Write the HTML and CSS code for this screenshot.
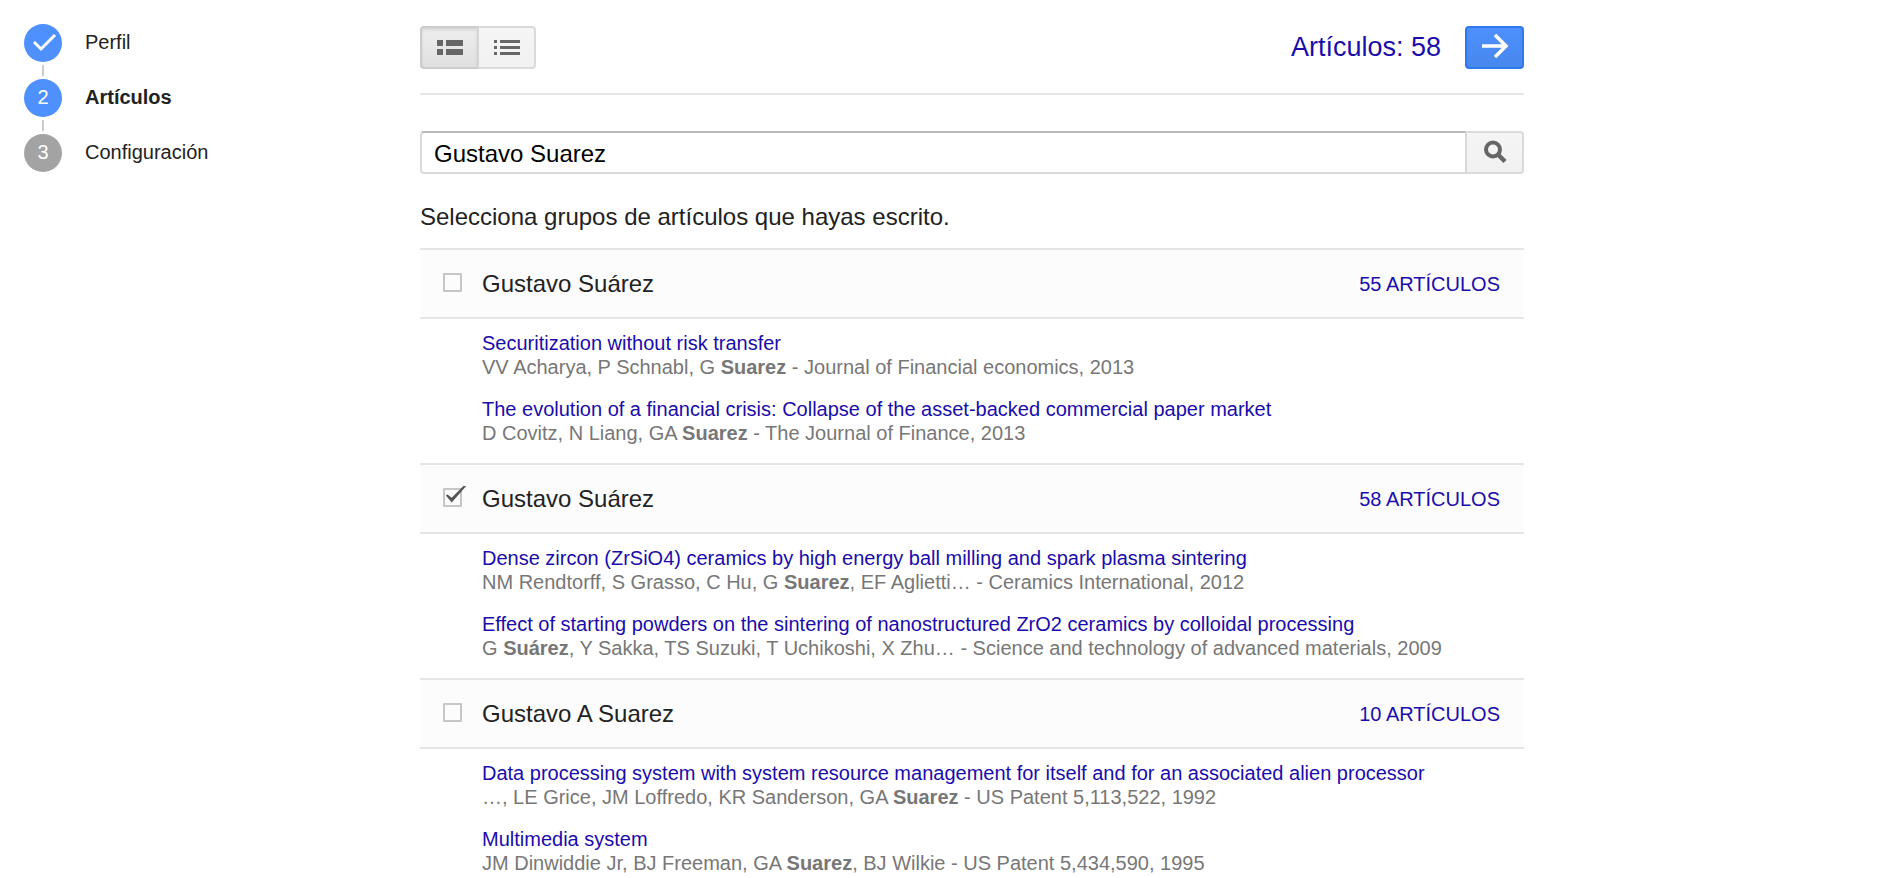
FILE: index.html
```html
<!DOCTYPE html>
<html lang="es">
<head>
<meta charset="utf-8">
<meta name="viewport" content="width=device-width, initial-scale=1">
<title>Artículos</title>
<link rel="stylesheet" href="styles.css">
</head>
<body>
<div class="page">
  <nav class="steps" aria-label="Pasos">
    <ol class="steps-list">
      <li class="step step-done">
        <span class="step-mark"><svg class="step-check" viewBox="0 0 38 38" aria-hidden="true"><path d="M10 18l7 7L31 11" fill="none" stroke="#fff" stroke-width="3"/></svg></span>
        <span class="step-label">Perfil</span>
      </li>
      <li class="step step-current" aria-current="step">
        <span class="step-mark">2</span>
        <span class="step-label">Artículos</span>
      </li>
      <li class="step">
        <span class="step-mark">3</span>
        <span class="step-label">Configuración</span>
      </li>
    </ol>
  </nav>

  <main class="content">
    <header class="toolbar">
      <div class="view-toggle" role="group" aria-label="Vista">
        <button class="btn btn-left is-pressed" type="button" aria-pressed="true" aria-label="Grupos">
          <svg class="icon" viewBox="0 0 32 32" aria-hidden="true"><path fill="#666" d="M3 9h6v6H3zM12 9h17v6H12zM3 18h6v6H3zM12 18h17v6H12z"/></svg>
        </button>
        <button class="btn btn-right" type="button" aria-pressed="false" aria-label="Lista">
          <svg class="icon" viewBox="0 0 32 32" aria-hidden="true"><path fill="#666" d="M3 9h3v3H3zM9 9h20v3H9zM3 15h3v3H3zM9 15h20v3H9zM3 21h3v3H3zM9 21h20v3H9z"/></svg>
        </button>
      </div>
      <div class="toolbar-end">
        <a class="total" href="#">Artículos: 58</a>
        <button class="btn btn-primary" type="button" aria-label="Siguiente">
          <svg class="icon" viewBox="0 0 32 32" aria-hidden="true"><path d="M3 15h24M16 4l11 11-11 11" fill="none" stroke="#fff" stroke-width="3.5"/></svg>
        </button>
      </div>
    </header>

    <form class="search">
      <input class="search-input" type="text" value="Gustavo Suarez" aria-label="Buscar artículos">
      <button class="btn btn-right" type="button" aria-label="Buscar">
        <svg class="icon" viewBox="0 0 32 32" aria-hidden="true"><g fill="none" stroke="#666"><circle cx="14" cy="13.5" r="7" stroke-width="4"/><path d="M19 18.500l7 7" stroke-width="4.500"/></g></svg>
      </button>
    </form>

    <p class="hint">Selecciona grupos de artículos que hayas escrito.</p>

    <section class="group">
      <div class="group-head">
        <input class="check" type="checkbox" id="g1">
        <label class="group-name" for="g1">Gustavo Suárez</label>
        <a class="group-count" href="#">55 ARTÍCULOS</a>
      </div>
      <ul class="articles">
        <li><a class="title" href="#">Securitization without risk transfer</a><div class="meta">VV Acharya, P Schnabl, G <b>Suarez</b> - Journal of Financial economics, 2013</div></li>
        <li><a class="title" href="#">The evolution of a financial crisis: Collapse of the asset-backed commercial paper market</a><div class="meta">D Covitz, N Liang, GA <b>Suarez</b> - The Journal of Finance, 2013</div></li>
      </ul>
    </section>

    <section class="group">
      <div class="group-head">
        <input class="check" type="checkbox" id="g2" checked>
        <label class="group-name" for="g2">Gustavo Suárez</label>
        <a class="group-count" href="#">58 ARTÍCULOS</a>
      </div>
      <ul class="articles">
        <li><a class="title" href="#">Dense zircon (ZrSiO4) ceramics by high energy ball milling and spark plasma sintering</a><div class="meta">NM Rendtorff, S Grasso, C Hu, G <b>Suarez</b>, EF Aglietti… - Ceramics International, 2012</div></li>
        <li><a class="title" href="#">Effect of starting powders on the sintering of nanostructured ZrO2 ceramics by colloidal processing</a><div class="meta">G <b>Suárez</b>, Y Sakka, TS Suzuki, T Uchikoshi, X Zhu… - Science and technology of advanced materials, 2009</div></li>
      </ul>
    </section>

    <section class="group">
      <div class="group-head">
        <input class="check" type="checkbox" id="g3">
        <label class="group-name" for="g3">Gustavo A Suarez</label>
        <a class="group-count" href="#">10 ARTÍCULOS</a>
      </div>
      <ul class="articles">
        <li><a class="title" href="#">Data processing system with system resource management for itself and for an associated alien processor</a><div class="meta">…, LE Grice, JM Loffredo, KR Sanderson, GA <b>Suarez</b> - US Patent 5,113,522, 1992</div></li>
        <li><a class="title" href="#">Multimedia system</a><div class="meta">JM Dinwiddie Jr, BJ Freeman, GA <b>Suarez</b>, BJ Wilkie - US Patent 5,434,590, 1995</div></li>
      </ul>
    </section>
  </main>
</div>
</body>
</html>
```

FILE: styles.css
```css
* {
  box-sizing: border-box;
}

body {
  margin: 0;
  background: #fff;
  color: #222;
  font-family: "Liberation Sans", Arial, sans-serif;
  font-size: 20px;
  line-height: 24px;
}

a {
  color: #1a0dab;
  text-decoration: none;
}

.page {
  display: flex;
  gap: 24px;
  padding: 24px;
  padding-bottom: 0;
}

/* Steps */
.steps {
  flex: 0 0 372px;
}

.steps-list {
  display: flex;
  flex-direction: column;
  gap: 17px;
  margin: 0;
  padding: 0;
  list-style: none;
}

.step {
  position: relative;
  display: flex;
  align-items: center;
  gap: 23px;
}

.step + .step::before {
  content: "";
  position: absolute;
  left: 18px;
  top: -14px;
  width: 2px;
  height: 11px;
  background: #ccc;
}

.step-mark {
  display: flex;
  align-items: center;
  justify-content: center;
  width: 38px;
  height: 38px;
  border-radius: 50%;
  background: #a3a3a3;
  color: #fff;
}

.step-done .step-mark,
.step-current .step-mark {
  background: #4d90fe;
}

.step-current .step-label {
  font-weight: bold;
}

.step-mark,
.step-label {
  padding-bottom: 2px;
}

.step-done .step-mark {
  padding: 0;
}

.step-check {
  width: 38px;
  height: 38px;
}

/* Main column */
.content {
  flex: 0 1 1104px;
  min-width: 0;
}

.toolbar {
  display: flex;
  align-items: center;
  justify-content: space-between;
  padding: 2px 0 24px;
  border-bottom: 2px solid #e5e5e5;
}

.toolbar-end {
  display: flex;
  align-items: center;
  gap: 24px;
}

.view-toggle {
  display: flex;
}

.total {
  padding-bottom: 2px;
  font-size: 27px;
  line-height: 32px;
}

.btn {
  display: flex;
  align-items: center;
  justify-content: center;
  flex: none;
  width: 59px;
  height: 43px;
  padding: 0 0 2px;
  border: 2px solid #dadada;
  border-radius: 4px;
  background: linear-gradient(#f5f5f5, #f1f1f1);
  cursor: pointer;
}

.btn-left {
  border-radius: 4px 0 0 4px;
}

.btn-right {
  width: 57px;
  border-left: 0;
  border-radius: 0 4px 4px 0;
}

.is-pressed {
  border-color: #ccc #d5d5d5 #ccc #ccc;
  background: linear-gradient(#eee, #e0e0e0);
  box-shadow: inset 0 2px 3px rgba(0, 0, 0, 0.1);
}

.btn-primary {
  border-color: #3079ed;
  background: linear-gradient(#4d90fe, #4787ed);
}

.icon {
  display: block;
  width: 32px;
  height: 32px;
}

.search {
  display: flex;
  margin-top: 36px;
}

.search-input {
  flex: 1;
  min-width: 0;
  height: 43px;
  padding: 2px 12px 0;
  border: 2px solid #d9d9d9;
  border-top-color: #b9b9b9;
  border-radius: 4px 0 0 4px;
  background: #fff;
  color: #000;
  font-family: inherit;
  font-size: 24px;
}

.hint {
  margin: 0;
  padding: 29px 0 17px;
  font-size: 24px;
  line-height: 28px;
}

/* Groups */
.group-head {
  display: flex;
  align-items: center;
  height: 71px;
  padding: 0 24px 0 23px;
  border-top: 2px solid #e5e5e5;
  border-bottom: 2px solid #e5e5e5;
  background: #fcfcfc;
}

.check {
  position: relative;
  appearance: none;
  flex: none;
  width: 19px;
  height: 19px;
  margin: 0 20px 3px 0;
  border: 2px solid #c6c6c6;
  border-radius: 1px;
}

.check:checked::after {
  content: "";
  position: absolute;
  left: 0;
  top: -4px;
  width: 21px;
  height: 18px;
  background: #555;
  clip-path: polygon(4% 56%, 12% 50%, 32% 68%, 90% 0, 100% 4%, 32% 94%);
}

.group-name {
  font-size: 24px;
  line-height: 28px;
}

.group-count {
  margin-left: auto;
}

.articles {
  display: flex;
  flex-direction: column;
  gap: 18px;
  margin: 0;
  padding: 12px 24px 18px 62px;
  list-style: none;
}

.title {
  display: block;
}

.meta {
  color: #777;
}
```
